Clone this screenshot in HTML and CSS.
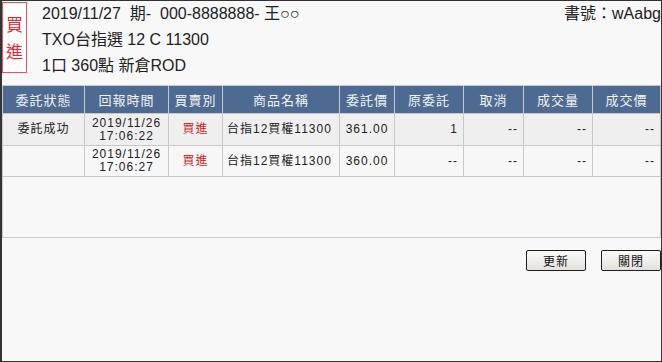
FILE: index.html
```html
<!DOCTYPE html>
<html lang="zh-Hant">
  <head>
    <meta charset="UTF-8" />
    <title>委託回報</title>
    <link rel="stylesheet" href="styles.css">
  </head>
  <body>
    <div class="top">
      <div class="badge">買<br />進</div>
      <div class="info">
        <div>2019/11/27&nbsp; 期-&nbsp; 000-8888888- 王○○</div>
        <div>TXO台指選 12 C 11300</div>
        <div>1口 360點 新倉ROD</div>
      </div>
      <div class="book">書號：wAabg</div>
    </div>

    <div class="grid-box">
      <table class="orders">
        <colgroup>
          <col class="c1" /><col class="c2" /><col class="c3" />
          <col class="c4" /><col class="c5" /><col class="c6" />
          <col class="c7" /><col class="c8" /><col class="c9" />
        </colgroup>
        <thead>
          <tr>
            <th>委託狀態</th>
            <th>回報時間</th>
            <th>買賣別</th>
            <th>商品名稱</th>
            <th>委託價</th>
            <th>原委託</th>
            <th>取消</th>
            <th>成交量</th>
            <th>成交價</th>
          </tr>
        </thead>
        <tbody>
          <tr class="odd">
            <td class="center">委託成功</td>
            <td class="center">2019/11/26<br />17:06:22</td>
            <td class="center buy">買進</td>
            <td class="left">台指12買權11300</td>
            <td class="center">361.00</td>
            <td class="right">1</td>
            <td class="right">--</td>
            <td class="right">--</td>
            <td class="right">--</td>
          </tr>
          <tr>
            <td></td>
            <td class="center">2019/11/26<br />17:06:27</td>
            <td class="center buy">買進</td>
            <td class="left">台指12買權11300</td>
            <td class="center">360.00</td>
            <td class="right">--</td>
            <td class="right">--</td>
            <td class="right">--</td>
            <td class="right">--</td>
          </tr>
        </tbody>
      </table>
    </div>

    <div class="actions">
      <button type="button">更新</button>
      <button type="button">關閉</button>
    </div>
  </body>
</html>
```

FILE: styles.css
```css
* {
  box-sizing: border-box;
}

html,
body {
  margin: 0;
}

body {
  width: 662px;
  height: 362px;
  overflow: hidden;
  background: #f8f8f8;
  border: 1px solid #333;
  border-left-width: 2px;
  font-family: "Liberation Sans", "Noto Sans CJK TC", sans-serif;
  color: #222;
}

.top {
  display: flex;
  height: 84px;
}

.badge {
  width: 25px;
  height: 71px;
  margin-top: 1px;
  padding-top: 9px;
  border: 1px solid #e8505e;
  background: #fcfcfc;
  color: #e02434;
  font-size: 17px;
  line-height: 27px;
  text-align: center;
}

.info {
  margin-left: 15px;
  font-size: 16px;
  line-height: 26px;
}

.book {
  margin-left: auto;
  font-size: 16px;
  line-height: 26px;
  white-space: nowrap;
}

.grid-box {
  height: 153px;
  border: 1px solid #cbcbcb;
}

.orders {
  width: 658px;
  border-collapse: collapse;
  table-layout: fixed;
  margin: -1px 0 0 -1px;
}

.c1 { width: 82px; }
.c2 { width: 84px; }
.c3 { width: 54px; }
.c4 { width: 117px; }
.c5 { width: 55px; }
.c6 { width: 69px; }
.c7 { width: 60px; }
.c8 { width: 69px; }
.c9 { width: 68px; }

.orders th,
.orders td {
  border: 1px solid #c8c8c8;
  padding: 0;
  white-space: nowrap;
  overflow: hidden;
}

.orders th {
  height: 28px;
  background: #4d6a93;
  color: #f4f4f4;
  font-size: 13px;
  font-weight: normal;
  letter-spacing: 1px;
  text-align: center;
}

.orders td {
  height: 31px;
  font-size: 12px;
  line-height: 13px;
  letter-spacing: 1px;
  color: #222;
  background: #f7f7f7;
}

.orders tr.odd td {
  height: 32px;
  background: #efefef;
}

.center {
  text-align: center;
}

.left {
  text-align: left;
  padding-left: 4px !important;
}

.right {
  text-align: right;
  padding-right: 5px !important;
}

.buy {
  color: #d01818 !important;
}

.actions {
  display: flex;
  justify-content: flex-end;
  gap: 15px;
  margin-top: 12px;
}

.actions button {
  width: 60px;
  height: 21px;
  padding: 0;
  border: 1px solid #1e1e1e;
  border-radius: 2px;
  background: linear-gradient(#fbfbf9, #e2e1db);
  font-family: "Noto Sans CJK TC", sans-serif;
  font-size: 12px;
  color: #111;
  letter-spacing: 1px;
}
```
